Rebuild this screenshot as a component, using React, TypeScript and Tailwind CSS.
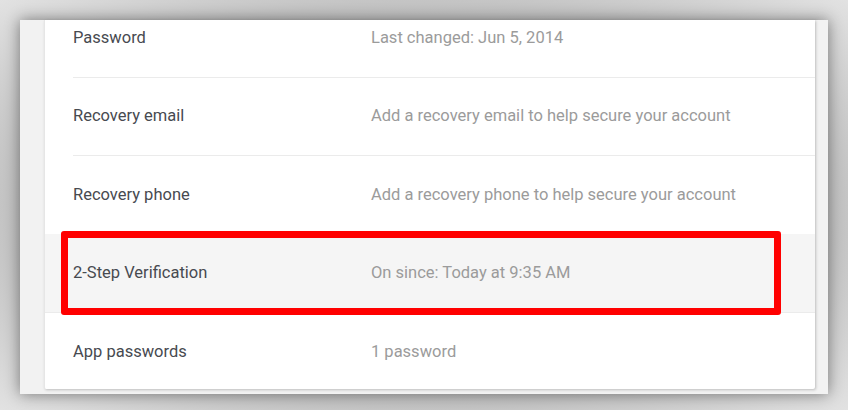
import React from "react";

type Row = { label: string; value: string; highlight?: boolean };

const rows: Row[] = [
  { label: "Password", value: "Last changed: Jun 5, 2014" },
  { label: "Recovery email", value: "Add a recovery email to help secure your account" },
  { label: "Recovery phone", value: "Add a recovery phone to help secure your account" },
  { label: "2-Step Verification", value: "On since: Today at 9:35 AM", highlight: true },
  { label: "App passwords", value: "1 password" },
];

export default function App() {
  return (
    <div
      className="w-[848px] h-[410px] bg-[radial-gradient(ellipse_at_center,#9a9a9a_0%,#c4c4c4_70%,#e2e2e2_100%)] pt-[20px] pl-[20px]"
      style={{ fontFamily: "Roboto, 'Liberation Sans', sans-serif" }}
    >
      <div className="relative w-[808px] h-[374px] bg-[#f2f2f2] shadow-[0_0_14px_rgba(0,0,0,0.45)] pl-[24px] pr-[13px] pb-[5px]">
        <div className="h-full bg-white overflow-hidden rounded-b-[2px] border-l border-[#e6e6e6] shadow-[1px_1px_3px_rgba(0,0,0,0.22)]">
          <div className="-mt-[20px]">
            {rows.map((r, i) => (
              <div key={r.label} className={r.highlight ? "bg-[#f5f5f5] border-b border-[#ebebeb]" : ""}>
                <div
                  className={
                    "ml-[28px] h-[78px] flex items-center text-[16.5px] " +
                    (i < rows.length - 1 && !r.highlight && !rows[i + 1]?.highlight ? "border-b border-[#ebebeb]" : "")
                  }
                >
                  <div className="w-[298px] text-[#474a50]">{r.label}</div>
                  <div className="text-[#9b9b9b]">{r.value}</div>
                </div>
              </div>
            ))}
          </div>
        </div>
        <div className="absolute left-[41px] top-[211px] w-[720px] h-[84px] border-[7px] border-[#ff0000] rounded-[3px]" />
      </div>
    </div>
  );
}
